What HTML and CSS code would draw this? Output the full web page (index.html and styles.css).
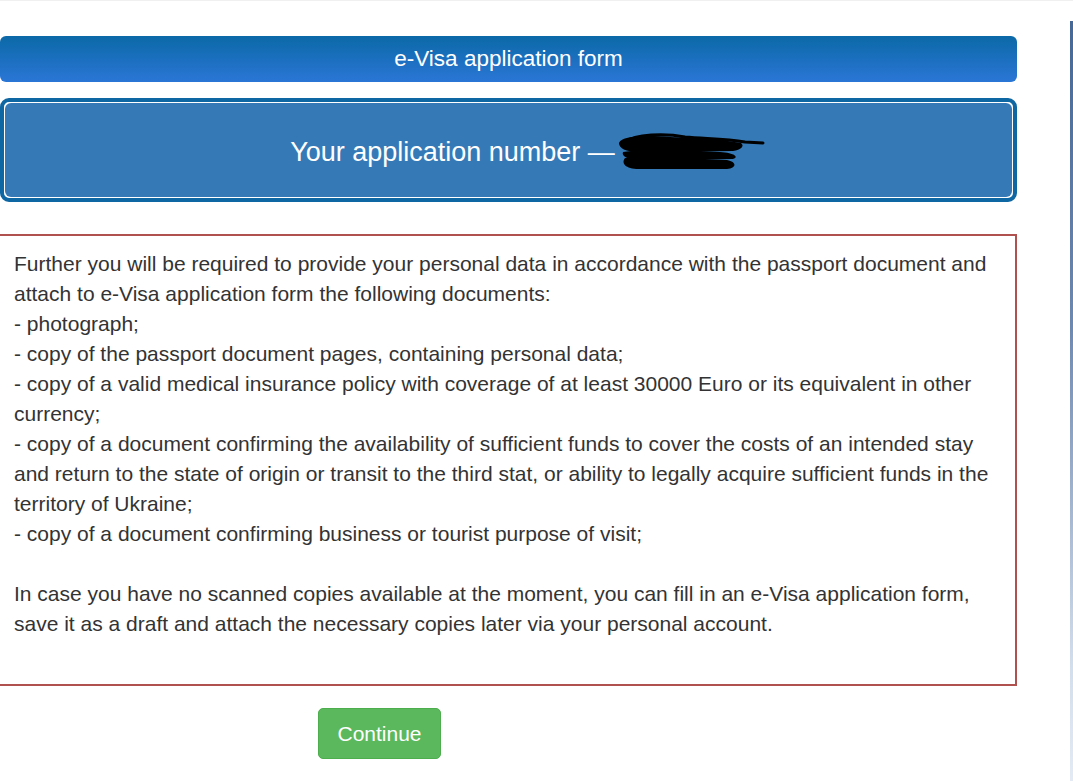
FILE: index.html
```html
<!DOCTYPE html>
<html lang="en">
<head>
<meta charset="utf-8">
<title>e-Visa application form</title>
<link rel="stylesheet" href="styles.css">
</head>
<body>
<div class="page">
  <main class="main">
    <div class="title-bar">e-Visa application form</div>
    <div class="app-box">
      <div class="app-inner">
        <span class="app-text">Your application number —</span>
        <svg class="redact" width="150" height="42" viewBox="0 0 150 42" aria-hidden="true">
          <path d="M10 12 C20 4, 50 3, 70 7 C90 9, 110 8, 130 12 L148 13" stroke="#000" stroke-width="3" fill="none" stroke-linecap="round"/>
          <path d="M4 14 C4 6, 30 5, 55 7 C80 8, 105 9, 126 13 C130 16, 126 20, 118 21 L40 22 C20 23, 6 22, 4 14 Z" fill="#000"/>
          <path d="M8 22 C30 19, 70 20, 105 22 C120 23, 124 27, 118 29 L30 30 C14 30, 6 27, 8 22 Z" fill="#000"/>
          <path d="M10 28 C30 26, 70 28, 112 30 C122 32, 122 38, 112 39 L24 39 C10 39, 6 33, 10 28 Z" fill="#000"/>
        </svg>
      </div>
    </div>
    <section class="notice">
      <p>Further you will be required to provide your personal data in accordance with the passport document and attach to e-Visa application form the following documents:<br>
      - photograph;<br>
      - copy of the passport document pages, containing personal data;<br>
      - copy of a valid medical insurance policy with coverage of at least 30000 Euro or its equivalent in other currency;<br>
      - copy of a document confirming the availability of sufficient funds to cover the costs of an intended stay and return to the state of origin or transit to the third stat, or ability to legally acquire sufficient funds in the territory of Ukraine;<br>
      - copy of a document confirming business or tourist purpose of visit;</p>
      <p>In case you have no scanned copies available at the moment, you can fill in an e-Visa application form, save it as a draft and attach the necessary copies later via your personal account.</p>
    </section>
    <div class="actions">
      <button class="btn-continue" type="button">Continue</button>
    </div>
  </main>
  <div class="rail"></div>
</div>
</body>
</html>
```

FILE: styles.css
```css
html, body {
  margin: 0;
  padding: 0;
  background: #fff;
  overflow: hidden;
}
body {
  font-family: "Liberation Sans", Arial, Helvetica, sans-serif;
  color: #333;
  border-top: 1px solid #f0f0f0;
}
.page {
  display: flex;
  width: 1073px;
  height: 780px;
}
.main {
  width: 1017px;
  flex: none;
  padding-top: 35px;
}
.rail {
  margin-left: 53px;
  margin-top: 20px;
  width: 3px;
  background: linear-gradient(to bottom, #456896 0%, #6d88b0 40%, #d3deec 85%, #e3eaf4 100%);
}
.title-bar {
  height: 46px;
  border-radius: 6px;
  background: linear-gradient(to bottom, #0c69a7 0%, #2a76d6 100%);
  color: #fff;
  font-size: 22.5px;
  display: flex;
  align-items: center;
  justify-content: center;
}
.app-box {
  margin-top: 16px;
  height: 104px;
  box-sizing: border-box;
  border: 4px solid #0e67a2;
  border-radius: 9px;
  padding: 1px;
  background: #fff;
}
.app-inner {
  height: 100%;
  border-radius: 6px;
  background: #357ab7;
  display: flex;
  align-items: center;
  justify-content: center;
  color: #fff;
  font-size: 27px;
}
.app-text {
  margin-left: 38px;
  margin-top: 4px;
}
.redact {
  margin-left: 0;
  margin-top: 2px;
}
.notice {
  margin-top: 32px;
  margin-left: -2px;
  height: 452px;
  box-sizing: border-box;
  border: 2px solid #b0504f;
  padding: 13px 14px 0 14px;
  font-size: 21px;
  line-height: 30px;
}
.notice p {
  margin: 0 0 30px 0;
}
.actions {
  display: flex;
  padding-left: 318px;
  margin-top: 22px;
}
.btn-continue {
  width: 123px;
  height: 51px;
  background: #5cb85c;
  border: 1px solid #4cae4c;
  border-radius: 5px;
  color: #fff;
  font-family: "Liberation Sans", Arial, sans-serif;
  font-size: 21px;
  padding: 0;
}
```
